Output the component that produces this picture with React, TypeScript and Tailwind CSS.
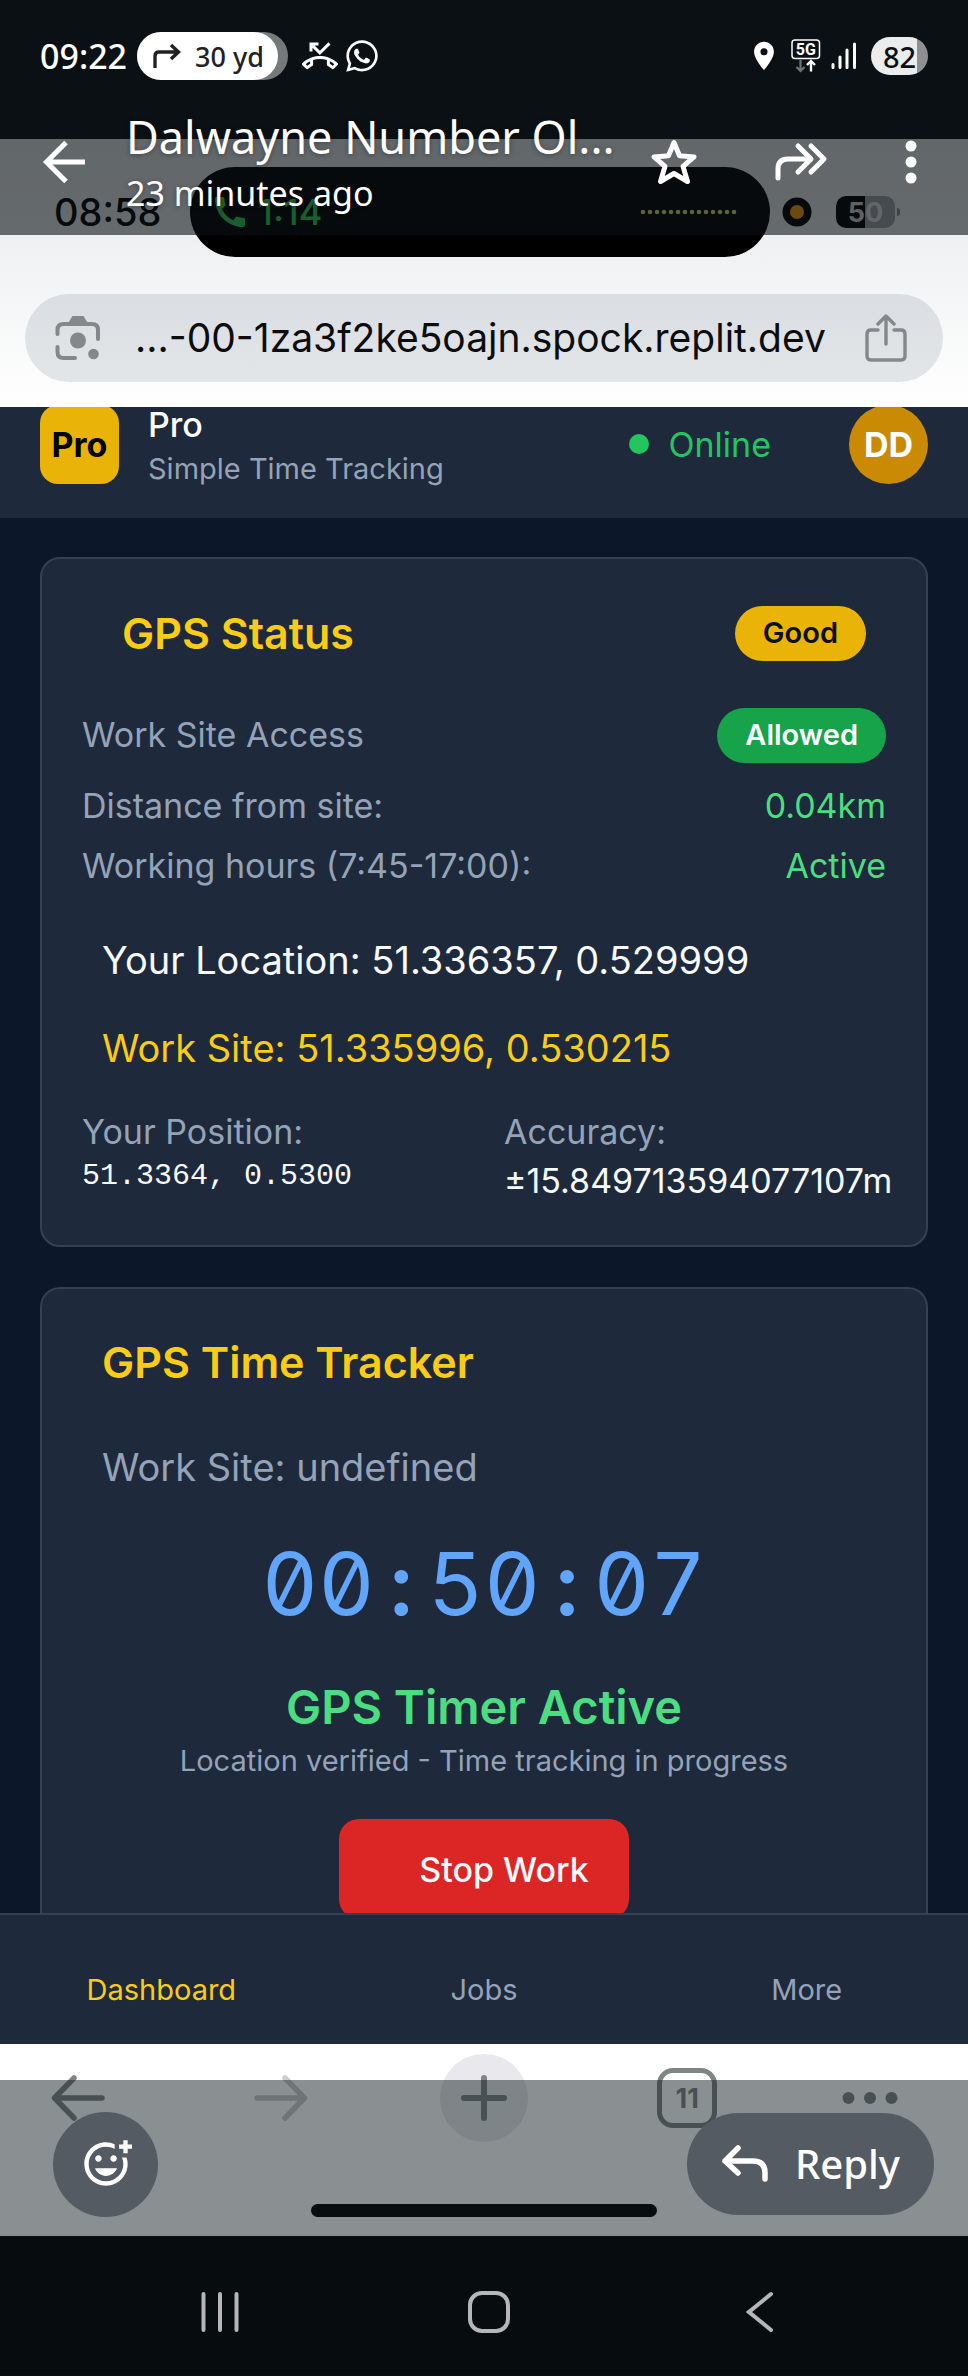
import type { ReactNode } from "react";
import { FaWhatsapp } from "react-icons/fa";
import {
  MdCall,
  MdLocationOn,
  MdOutlineAddReaction,
  MdOutlinePhoneMissed,
} from "react-icons/md";

function TurnRightIcon() {
  return (
    <svg viewBox="0 0 28 26" className="h-[26px] w-7" fill="none" stroke="#222" strokeWidth="3.4">
      <path d="M2 25V13q0-4 4-4h19M18 2l7.500 7-7.500 7" />
    </svg>
  );
}

function NetworkIcon() {
  return (
    <svg viewBox="0 0 30 34" className="h-[34px] w-[30px]" fill="none">
      <rect x="1" y="1" width="27.500" height="18.500" rx="3" stroke="#fff" strokeWidth="1.500" />
      <text x="14.800" y="16" textAnchor="middle" fontFamily="Roboto, sans-serif" fontWeight="700" fontSize="16" fill="#fff">
        5G
      </text>
      <path d="M9.500 21v10.500M5.500 28l4 4 4-4" stroke="#6f7476" strokeWidth="2.200" />
      <path d="M20 32.500V22.500M16 26l4-4 4 4" stroke="#fff" strokeWidth="2.400" />
    </svg>
  );
}

function SignalIcon() {
  return (
    <svg viewBox="0 0 26 28" className="h-7 w-[26px]" stroke="#fff" strokeWidth="3" strokeLinecap="round">
      <path d="M2 25.500v-3M9 25.500V15M16 25.500V8M23.500 25.500V2" />
    </svg>
  );
}

function StatusBar() {
  return (
    <div className="flex h-28 items-center justify-between px-10 text-white">
      <div className="flex items-center">
        <span className="w-[97px] text-[34px] leading-none font-medium">09:22</span>
        <span className="flex rounded-full bg-[#75797b] pr-2.5">
          <span className="flex h-12 w-[141px] items-center gap-3.5 rounded-full bg-white pl-4 text-[#222]">
            <TurnRightIcon />
            <span className="text-[27px] leading-none font-medium whitespace-nowrap">30 yd</span>
          </span>
        </span>
        <MdOutlinePhoneMissed className="ml-3.5 size-9" />
        <FaWhatsapp className="ml-1.5 size-9" />
      </div>
      <div className="flex items-center">
        <MdLocationOn className="mr-2.5 size-[34px]" />
        <NetworkIcon />
        <span className="mr-3.5 ml-2.5">
          <SignalIcon />
        </span>
        <span className="flex h-[38px] w-[57px] items-center justify-center rounded-full bg-linear-to-r from-[#ececec] from-80% to-[#8d8f90] to-80% text-[29px] leading-none font-medium text-[#0a1114]">
          82
        </span>
      </div>
    </div>
  );
}

function ViewerHeader() {
  return (
    <header className="absolute inset-x-0 top-0 h-[235px] bg-[#0a1114]/60 font-['Noto_Sans','Open_Sans',sans-serif]">
      <StatusBar />
      <div className="flex h-[100px] items-center pr-[51px] pl-[42px] text-white [text-shadow:0_1px_5px_rgba(0,0,0,0.35)]">
        <button type="button" aria-label="Back">
          <svg viewBox="0 0 44 44" className="size-11" fill="none" stroke="#fff" strokeWidth="5">
            <path d="M43 22H5M24 2.500L4.500 22 24 41.500" />
          </svg>
        </button>
        <div className="mt-1 ml-10 flex flex-col whitespace-nowrap">
          <span className="text-[45px] leading-[58px]">Dalwayne Number Ol...</span>
          <span className="text-[34px] leading-[54px]">23 minutes ago</span>
        </div>
        <div className="ml-auto flex items-center">
          <button type="button" aria-label="Favourite">
            <svg viewBox="0 0 48 48" className="size-12" fill="none" stroke="#fff" strokeWidth="5" strokeLinejoin="round">
              <path d="M24 4.500l5.500 13.200 14.500 1.200-11 9.500 4.500 15.100L24 35.500l-13.500 8 4.500-15.100-11-9.500 14.500-1.200z" />
            </svg>
          </button>
          <button type="button" aria-label="Forward" className="ml-[76px]">
            <svg viewBox="0 0 54 40" className="h-10 w-[54px]" fill="none" stroke="#fff" strokeWidth="5" strokeLinecap="round" strokeLinejoin="round">
              <path d="M4 36V27Q4 17 14 17H36M24 4l13 13-13 13M37 4l13 13-13 13" />
            </svg>
          </button>
          <button type="button" aria-label="More options" className="ml-[77px]">
            <svg viewBox="0 0 12 44" className="h-11 w-3" fill="#fff">
              <circle cx="6" cy="6" r="5.500" />
              <circle cx="6" cy="22" r="5.500" />
              <circle cx="6" cy="38" r="5.500" />
            </svg>
          </button>
        </div>
      </div>
    </header>
  );
}

function PhoneStatus() {
  return (
    <div className="flex h-[90px] items-center pr-[68px] pl-[54px]">
      <span className="w-[136px] text-[38px] leading-none font-medium text-black">08:58</span>
      <div className="flex h-[90px] grow items-center rounded-full bg-black pr-8 pl-[20px]">
        <MdCall className="size-10 text-[#30d158]" />
        <span className="ml-2 text-[36px] leading-none font-medium text-[#30d158]">1:14</span>
        <svg viewBox="0 0 98 6" className="ml-auto h-1.5 w-[98px]" stroke="#d5e060" strokeWidth="4.600" strokeLinecap="round" strokeDasharray="0 7">
          <path d="M3 3h93" />
        </svg>
      </div>
      <svg viewBox="0 0 30 30" className="ml-3 size-[30px]">
        <circle cx="15" cy="15" r="14.500" fill="#000" />
        <circle cx="15" cy="15" r="7" fill="#ff9f0a" />
      </svg>
      <span className="ml-6 flex h-8 w-[59px] items-center justify-center rounded-[10px] bg-linear-to-r from-black from-50% to-[#9fa2a5] to-50% text-[27px] leading-none font-bold">
        <span className="text-[#d9dadb]">5</span>
        <span className="text-[#e5e6e8]">0</span>
      </span>
      <span className="ml-0.5 h-2 w-[3px] rounded-r-full bg-[#8b8e91]" />
    </div>
  );
}

function AddressBar() {
  return (
    <div className="mx-[25px] mt-[37px] flex h-[88px] items-center rounded-full bg-linear-to-b from-[#dadde1] to-[#e3e6e9] pr-9 pl-[30px]">
      <svg viewBox="0 0 46 46" className="size-[46px]" fill="none" stroke="#85888b" strokeWidth="4" strokeLinecap="round">
        <path d="M2.500 19V15q0-6 6-6H37q6 0 6 6v9M2.500 32v5q0 6 6 6H20" />
        <path d="M15 7l3-5h10l3 5z" fill="#85888b" strokeWidth="2" />
        <circle cx="23" cy="25.500" r="8" fill="#85888b" stroke="none" />
        <circle cx="38.500" cy="39" r="5.300" fill="#85888b" stroke="none" />
      </svg>
      <label className="mr-5 ml-[34px] flex grow">
        <span className="sr-only">Address</span>
        <input
          type="text"
          defaultValue="...-00-1za3f2ke5oajn.spock.replit.dev"
          className="w-full min-w-0 bg-transparent text-[39px] leading-[50px] text-[#0c0c0d] outline-none"
        />
      </label>
      <button type="button" aria-label="Share">
        <svg viewBox="0 0 42 48" className="h-12 w-[42px]" fill="none" stroke="#85888b" strokeWidth="3.400" strokeLinecap="round" strokeLinejoin="round">
          <path d="M13 16H6q-4 0-4 4V42q0 4 4 4H36q4 0 4-4V20q0-4-4-4H29M21 30V3M13 10l8-8 8 8" />
        </svg>
      </button>
    </div>
  );
}

function AppHeader() {
  return (
    <header className="h-[111px] overflow-hidden bg-[#1e293b] px-10">
      <div className="-mt-[3px] flex h-20 items-center">
        <div className="flex size-[79px] shrink-0 items-center justify-center rounded-[18px] bg-[#eab308] text-[34px] font-bold text-black">
          Pro
        </div>
        <div className="ml-[29px] flex flex-col pt-1.5">
          <span className="text-[34px] leading-11 font-medium text-white">Pro</span>
          <span className="text-[29px] leading-11 text-[#94a3b8]">Simple Time Tracking</span>
        </div>
        <div className="ml-auto flex items-center gap-5 text-[34px] text-[#22c55e]">
          <span className="size-5 rounded-full bg-[#22c55e]" />
          Online
        </div>
        <div className="ml-[78px] flex size-[79px] shrink-0 items-center justify-center rounded-full bg-[#ca8a04] text-[34px] font-bold text-white">
          DD
        </div>
      </div>
    </header>
  );
}

function Badge({ tone, children }: { tone: "warn" | "ok"; children: ReactNode }) {
  return (
    <span
      className={
        tone === "warn"
          ? "flex h-[55px] items-center rounded-full bg-[#eab308] px-7 text-[29px] font-semibold text-[#0f0f10]"
          : "flex h-[55px] items-center rounded-full bg-[#16a34a] px-7 text-[29px] font-semibold text-white"
      }
    >
      {children}
    </span>
  );
}

function StatusRow({ label, value }: { label: string; value: string }) {
  return (
    <div className="flex justify-between text-[34px] leading-[50px]">
      <span className="text-[#94a3b8]">{label}</span>
      <span className="text-[#4ade80]">{value}</span>
    </div>
  );
}

function GpsStatusCard() {
  return (
    <section className="rounded-[20px] border-2 border-[#334155] bg-[#1e293b] px-10 pt-[46px] pb-[37px]">
      <div className="flex items-center justify-between pr-5 pl-10">
        <h2 className="text-[43px] leading-14 font-semibold text-[#facc15]">GPS Status</h2>
        <Badge tone="warn">Good</Badge>
      </div>
      <div className="mt-[46px] flex items-center justify-between text-[34px] leading-14 text-[#94a3b8]">
        Work Site Access
        <Badge tone="ok">Allowed</Badge>
      </div>
      <div className="mt-[18px] flex flex-col gap-2.5">
        <StatusRow label="Distance from site:" value="0.04km" />
        <StatusRow label="Working hours (7:45-17:00):" value="Active" />
      </div>
      <div className="mt-[41px] flex flex-col gap-8 pl-5 text-[38px] leading-14">
        <p className="text-[#f8fafc]">Your Location: 51.336357, 0.529999</p>
        <p className="text-[#facc15]">Work Site: 51.335996, 0.530215</p>
      </div>
      <div className="mt-[34px] grid grid-cols-2 gap-10 text-[34px] leading-11">
        <div>
          <p className="text-[#94a3b8]">Your Position:</p>
          <p className="font-['Liberation_Mono',monospace] text-[30px] text-[#f8fafc]">51.3364, 0.5300</p>
        </div>
        <div className="min-w-0">
          <p className="text-[#94a3b8]">Accuracy:</p>
          <p className="leading-[54px] whitespace-nowrap text-[#f8fafc]">±15.849713594077107m</p>
        </div>
      </div>
    </section>
  );
}

function TimeTrackerCard() {
  return (
    <section className="rounded-t-[20px] border-2 border-b-0 border-[#334155] bg-[#1e293b] px-[60px] pt-[45px]">
      <h2 className="text-[43px] leading-14 font-semibold text-[#facc15]">GPS Time Tracker</h2>
      <p className="mt-[49px] text-[38px] leading-14 text-[#94a3b8]">Work Site: undefined</p>
      <div className="flex flex-col items-center">
        <p className="mt-11 flex text-[87px] leading-[90px] slashed-zero tabular-nums text-[#60a5fa]">
          <span>00</span>
          <span className="w-[53px] text-center font-semibold">:</span>
          <span>50</span>
          <span className="w-[53px] text-center font-semibold">:</span>
          <span>07</span>
        </p>
        <p className="mt-12 text-[47px] leading-[60px] font-semibold text-[#4ade80]">GPS Timer Active</p>
        <p className="mt-0.5 text-[29px] leading-11 text-[#94a3b8]">Location verified - Time tracking in progress</p>
        <button
          type="button"
          className="mt-9 h-[100px] rounded-[20px] bg-[#dc2626] pr-10 pl-20 text-[34px] font-medium text-[#f8fafc]"
        >
          Stop Work
        </button>
      </div>
    </section>
  );
}

function TabBar() {
  return (
    <nav className="relative -mt-1.5 grid h-[131px] grid-cols-3 items-center border-t-2 border-[#334155] bg-[#1e293b] pt-5 text-center text-[29px] text-[#94a3b8]">
      <a href="#dashboard" className="text-[#facc15]">Dashboard</a>
      <a href="#jobs">Jobs</a>
      <a href="#more">More</a>
    </nav>
  );
}

function BrowserToolbar() {
  return (
    <div className="relative h-48 overflow-hidden bg-white">
      <div className="-mx-6 grid grid-cols-5 place-items-center pt-2.5 text-[#7f8487]">
        <button type="button" aria-label="Previous page">
          <svg viewBox="0 0 54 46" className="h-[46px] w-[54px]" fill="none" stroke="currentColor" strokeWidth="5.500" strokeLinecap="round" strokeLinejoin="round">
            <path d="M51 23H4M23 3L3.500 23 23 43" />
          </svg>
        </button>
        <button type="button" aria-label="Next page" className="text-[#cbcccd]">
          <svg viewBox="0 0 54 46" className="h-[46px] w-[54px]" fill="none" stroke="currentColor" strokeWidth="5.500" strokeLinecap="round" strokeLinejoin="round">
            <path d="M3 23H50M31 3l19.500 20L31 43" />
          </svg>
        </button>
        <button type="button" aria-label="New tab" className="flex size-[88px] items-center justify-center rounded-full bg-[#e9e9ed]">
          <svg viewBox="0 0 46 46" className="size-[46px]" fill="none" stroke="currentColor" strokeWidth="6" strokeLinecap="round">
            <path d="M3 23H43M23 3V43" />
          </svg>
        </button>
        <button type="button" aria-label="Tabs" className="flex size-[60px] items-center justify-center rounded-2xl border-5 border-current text-[27px] leading-none font-bold">
          11
        </button>
        <button type="button" aria-label="Menu" className="pr-10">
          <svg viewBox="0 0 56 12" className="h-3 w-14" fill="currentColor">
            <circle cx="6.500" cy="6" r="6" />
            <circle cx="28" cy="6" r="6" />
            <circle cx="49.500" cy="6" r="6" />
          </svg>
        </button>
      </div>
      <div className="mx-auto mt-[62px] h-[13px] w-[346px] rounded-full bg-black" />
      <div className="absolute inset-x-0 bottom-0 flex h-[156px] items-center justify-between bg-[#101a1f]/49 pt-3 pr-[34px] pl-[53px] font-['Noto_Sans','Open_Sans',sans-serif]">
        <button type="button" aria-label="Add reaction" className="flex size-[105px] items-center justify-center rounded-full bg-[#555b62] text-white">
          <MdOutlineAddReaction className="size-[52px]" />
        </button>
        <button type="button" className="flex h-[102px] w-[247px] items-center justify-center gap-[26px] rounded-full bg-[#555b62] text-[40px] font-medium text-white">
          <svg viewBox="0 0 48 38" className="h-[38px] w-12" fill="none" stroke="#fff" strokeWidth="5.500" strokeLinecap="round" strokeLinejoin="round">
            <path d="M44 34V28Q44 16 32 16H4M17 3L4 16 17 28" />
          </svg>
          Reply
        </button>
      </div>
    </div>
  );
}

function SystemNav() {
  return (
    <nav className="grid h-[139px] grid-cols-[439px_100px_1fr] items-center bg-[#070d0f] pt-3">
      <div className="flex justify-center">
        <button type="button" aria-label="Recent apps">
          <svg viewBox="0 0 38 42" className="h-[42px] w-[38px]" stroke="#b5b6b8" strokeWidth="4" strokeLinecap="round">
            <path d="M2.500 3V39M19 3V39M35.500 3V39" />
          </svg>
        </button>
      </div>
      <div className="flex justify-center">
        <button type="button" aria-label="Home" className="size-[42px] rounded-[14px] border-4 border-[#b5b6b8]" />
      </div>
      <div className="flex justify-center pl-3">
        <button type="button" aria-label="Back">
          <svg viewBox="0 0 28 42" className="h-[42px] w-7" fill="none" stroke="#b5b6b8" strokeWidth="4" strokeLinecap="round">
            <path d="M25 3L3 21 25 39" />
          </svg>
        </button>
      </div>
    </nav>
  );
}

export default function App() {
  return (
    <div className="relative min-h-screen bg-[#0a1114] pt-[139px] font-['Inter','Liberation_Sans',sans-serif]">
      <div className="bg-linear-to-b from-[#e6e8ea] to-white pt-7 pb-[25px]">
        <PhoneStatus />
        <AddressBar />
      </div>
      <div className="bg-[#0d172a]">
        <AppHeader />
        <main className="flex flex-col gap-10 px-10 pt-[39px]">
          <GpsStatusCard />
          <TimeTrackerCard />
        </main>
        <TabBar />
      </div>
      <BrowserToolbar />
      <SystemNav />
      <ViewerHeader />
    </div>
  );
}
